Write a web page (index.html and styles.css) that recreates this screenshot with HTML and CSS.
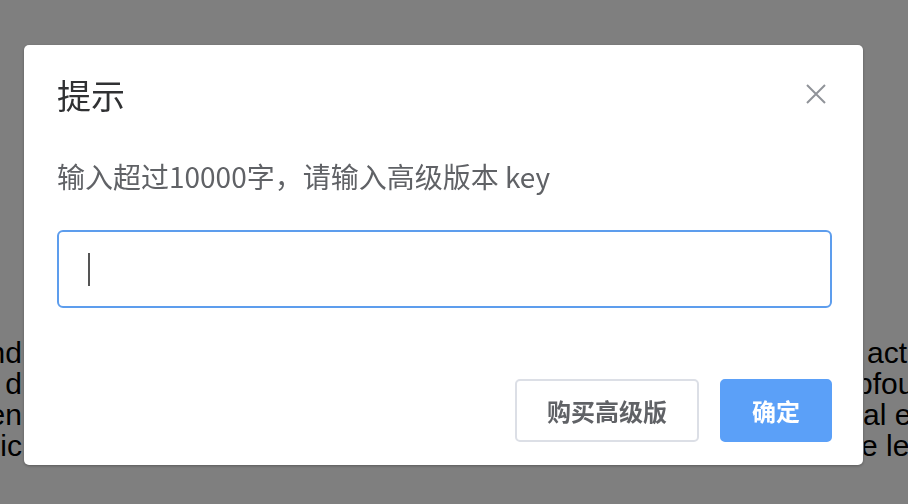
FILE: index.html
```html
<!DOCTYPE html>
<html lang="zh-CN">
<head>
<meta charset="utf-8">
<title>提示</title>
<link rel="stylesheet" href="styles.css">
</head>
<body>
<div class="page">
  <div class="bg-line"><span class="lf"><span>and</span></span><span class="rt"><span class="s1">act</span></span></div>
  <div class="bg-line"><span class="lf"><span>d</span></span><span class="rt"><span class="s2">pfou</span></span></div>
  <div class="bg-line"><span class="lf"><span>ten</span></span><span class="rt"><span class="s3">al e</span></span></div>
  <div class="bg-line"><span class="lf"><span>ic</span></span><span class="rt"><span class="s4">e le</span></span></div>
</div>
<div class="overlay">
  <div class="dialog">
    <div class="dialog-header">
      <span class="dialog-title">提示</span>
      <svg class="close" width="20" height="20" viewBox="0 0 20 20"><path d="M1 1L19 19M19 1L1 19" stroke="#909399" stroke-width="2" fill="none"/></svg>
    </div>
    <div class="dialog-body">输入超过10000字，请输入高级版本 key</div>
    <div class="text-input"><span class="caret"></span></div>
    <div class="dialog-footer">
      <button class="btn btn-default">购买高级版</button>
      <button class="btn btn-primary">确定</button>
    </div>
  </div>
</div>
</body>
</html>
```

FILE: styles.css
```css
html, body {
  margin: 0;
  padding: 0;
  background: #fff;
  height: 100%;
  overflow: hidden;
}

.page {
  padding-top: 337px;
  font-family: "Liberation Sans", Arial, sans-serif;
  font-size: 30px;
  line-height: 31px;
  color: #000;
}

.bg-line {
  display: flex;
  justify-content: space-between;
  height: 31px;
  white-space: nowrap;
}

.lf {
  width: 22px;
  display: flex;
  justify-content: flex-end;
  overflow: hidden;
}

.rt {
  width: 44px;
  overflow: hidden;
  display: flex;
}

.s1 { margin-left: 3px; }
.s2 { margin-left: -8px; }
.s3 { margin-left: -1px; }
.s4 { margin-left: -3px; }

.overlay {
  position: fixed;
  inset: 0;
  background: rgba(0, 0, 0, 0.5);
  padding: 45px 0 0 24px;
  box-sizing: border-box;
}

.dialog {
  width: 839px;
  height: 420px;
  box-sizing: border-box;
  background: #fff;
  border-radius: 5px;
  box-shadow: 0 1px 3px rgba(0, 0, 0, 0.3);
  padding: 30px 31px 22px 33px;
  display: flex;
  flex-direction: column;
  font-family: "Noto Sans CJK SC", "Noto Sans", sans-serif;
}

.dialog-header {
  height: 40px;
  display: flex;
  justify-content: space-between;
  align-items: center;
}

.dialog-title {
  font-size: 34px;
  line-height: 40px;
  color: #303133;
}

.close {
  margin-right: 6px;
  margin-top: -2px;
}

.dialog-body {
  margin-top: 43px;
  font-family: "Noto Sans CJK SC", sans-serif;
  font-size: 28px;
  line-height: 36px;
  color: #606266;
}

.text-input {
  margin-top: 36px;
  height: 78px;
  box-sizing: border-box;
  border: 2px solid #5d9ded;
  border-radius: 6px;
  display: flex;
  align-items: center;
  padding-left: 29px;
}

.caret {
  width: 2px;
  height: 33px;
  background: #555;
}

.dialog-footer {
  margin-top: 71px;
  display: flex;
  justify-content: flex-end;
  gap: 21px;
}

.btn {
  height: 63px;
  box-sizing: border-box;
  padding: 0 30px;
  font-family: "Noto Sans CJK SC", sans-serif;
  font-size: 24px;
  font-weight: 700;
  border-radius: 5px;
  border: 2px solid #dcdfe6;
  background: #fff;
  color: #606266;
}

.btn-primary {
  background: #5ba0f8;
  border-color: #5ba0f8;
  color: #fff;
}
```
